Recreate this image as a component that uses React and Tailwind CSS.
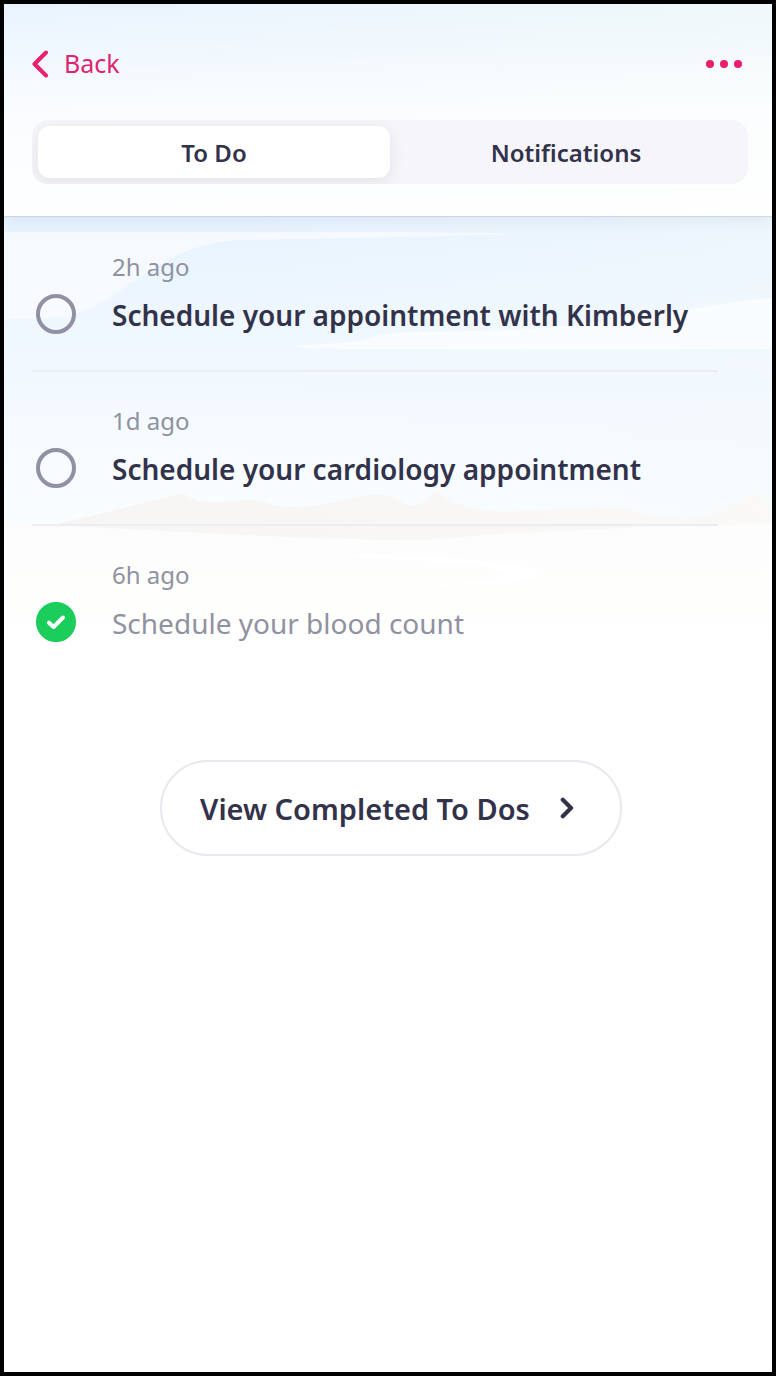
import { useState } from 'react';

const initialTodos = [
  { id: 'kimberly', time: '2h ago', title: 'Schedule your appointment with Kimberly', done: false },
  { id: 'cardiology', time: '1d ago', title: 'Schedule your cardiology appointment', done: false },
  { id: 'blood', time: '6h ago', title: 'Schedule your blood count', done: true },
];

/* Pale landscape: sky, clouds, hills and water fading to white. */
function Landscape() {
  return (
    <svg
      className="pointer-events-none absolute inset-x-0 top-0 h-[700px] w-full"
      viewBox="0 0 768 700"
      preserveAspectRatio="none"
      aria-hidden="true"
    >
      <defs>
        <linearGradient id="sky" x1="0" y1="212" x2="0" y2="520" gradientUnits="userSpaceOnUse">
          <stop offset="0" stopColor="#e6f2fe" />
          <stop offset="0.15" stopColor="#eaf5ff" />
          <stop offset="0.45" stopColor="#f1f8ff" />
          <stop offset="0.75" stopColor="#f6fbff" />
          <stop offset="1" stopColor="#f9fdff" />
        </linearGradient>
        <linearGradient id="glow" x1="0" y1="0" x2="768" y2="0" gradientUnits="userSpaceOnUse">
          <stop offset="0.3" stopColor="#f3f9fc" stopOpacity="0" />
          <stop offset="1" stopColor="#f3f9fc" stopOpacity="0.5" />
        </linearGradient>
        <linearGradient id="land" x1="0" y1="515" x2="0" y2="640" gradientUnits="userSpaceOnUse">
          <stop offset="0" stopColor="#fbfcfb" />
          <stop offset="0.6" stopColor="#fefefd" />
          <stop offset="1" stopColor="#ffffff" />
        </linearGradient>
        <linearGradient id="hills" x1="0" y1="0" x2="768" y2="0" gradientUnits="userSpaceOnUse">
          <stop offset="0" stopColor="#f7f5f4" />
          <stop offset="1" stopColor="#fbf9f8" />
        </linearGradient>
      </defs>
      <rect width="768" height="530" fill="url(#sky)" />
      <rect width="768" height="530" fill="url(#glow)" />
      <path
        d="M0 228H380C430 228 480 229 518 230C440 232 330 235 236 236C205 237 180 247 160 258C125 278 95 306 65 312C45 315 20 315 0 315Z"
        fill="#f7fbff"
        fillOpacity="0.9"
      />
      <path
        d="M288 342C310 340 345 340 365 334C395 325 440 329 500 326C580 324 620 311 670 307C700 304 735 296 768 294V345H370C340 345 300 345 288 342Z"
        fill="#fafdff"
        fillOpacity="0.9"
      />
      <path d="M0 520H768V640H0Z" fill="url(#land)" />
      <path
        d="M48 521C90 512 140 498 168 492C175 489 180 489 186 493C205 503 228 496 244 496C262 496 270 504 290 503C335 501 350 490 376 491C392 491 398 501 408 501C422 501 423 490 432 488C440 493 450 498 460 502C490 511 530 506 560 504C600 502 610 503 630 507C650 513 680 517 700 512C725 505 738 494 749 490C756 492 762 498 768 500V520C640 522 500 528 440 535C350 538 220 530 48 521Z"
        fill="url(#hills)"
      />
      <path
        d="M330 552C400 549 540 557 536 571C530 582 400 585 330 586C400 583 500 577 505 570C480 558 400 557 330 552Z"
        fill="#ffffff"
        fillOpacity="0.7"
      />
    </svg>
  );
}

function TodoItem({ todo, onToggle }) {
  return (
    <li className="mr-8 grid grid-cols-[40px_1fr] gap-x-9 gap-y-3 border-b-2 border-[#ececf3] py-[34px] pl-1 last:border-b-0">
      <p className="col-start-2 text-2xl leading-[30px] text-[#9091a1]">{todo.time}</p>
      <span className="col-start-1 grid size-10">
        <input
          id={todo.id}
          type="checkbox"
          checked={todo.done}
          onChange={onToggle}
          className="col-start-1 row-start-1 size-10 cursor-pointer appearance-none rounded-full border-4 border-[#9191a3] checked:border-[#1bcd5a] checked:bg-[#1bcd5a]"
        />
        {todo.done && (
          <svg
            className="pointer-events-none col-start-1 row-start-1 size-10"
            viewBox="0 0 40 40"
            fill="none"
            stroke="#ffffff"
            strokeWidth="4"
            strokeLinecap="round"
            strokeLinejoin="round"
            aria-hidden="true"
          >
            <path d="M13 20.7L17.6 25L27 15.5" />
          </svg>
        )}
      </span>
      <label
        htmlFor={todo.id}
        className={`text-[28px] leading-[42px] ${todo.done ? 'text-[#9091a1]' : 'font-semibold text-[#32324a]'}`}
      >
        {todo.title}
      </label>
    </li>
  );
}

export default function App() {
  const [todos, setTodos] = useState(initialTodos);
  const [tab, setTab] = useState('To Do');

  const toggle = (id) =>
    setTodos((list) => list.map((t) => (t.id === id ? { ...t, done: !t.done } : t)));

  return (
    <div className="relative flex min-h-screen flex-col border-4 border-black bg-white font-['Noto_Sans',sans-serif] text-[#32324a]">
      <Landscape />

      <header className="relative bg-white bg-linear-to-r from-[#e9f4ff] to-[#eff8fa] shadow-[0_1px_1px_rgba(60,70,100,0.12),0_4px_16px_rgba(60,70,100,0.07)]">
        <div className="bg-linear-to-b from-white/0 via-white/75 via-50% to-white/95 pt-10 pr-6 pb-8 pl-7">
          <div className="flex h-10 items-center justify-between">
            <a href="#back" className="flex items-center gap-4 text-[25px] text-[#e0226f]">
              <svg
                className="h-7 w-4"
                viewBox="0 0 16 28"
                fill="none"
                stroke="#e8206f"
                strokeWidth="4"
                strokeLinecap="round"
                strokeLinejoin="round"
                aria-hidden="true"
              >
                <path d="M14 2.5L2.5 14L14 25.5" />
              </svg>
              Back
            </a>
            <button type="button" aria-label="More options" className="flex h-10 cursor-pointer items-center pr-1.5">
              <svg className="h-2 w-9" viewBox="0 0 36 8" fill="#ec1c70" aria-hidden="true">
                <circle cx="4" cy="4" r="4" />
                <circle cx="18" cy="4" r="4" />
                <circle cx="32" cy="4" r="4" />
              </svg>
            </button>
          </div>

          <div role="tablist" className="mt-9 grid h-16 grid-cols-2 overflow-hidden rounded-2xl bg-[#f6f5fa] p-1.5">
            {['To Do', 'Notifications'].map((name) => (
              <button
                key={name}
                type="button"
                role="tab"
                aria-selected={tab === name}
                onClick={() => setTab(name)}
                className={`cursor-pointer rounded-xl pt-0.5 text-2xl font-semibold ${
                  tab === name ? 'bg-white shadow-[0_4px_16px_rgba(30,30,30,0.09)]' : ''
                }`}
              >
                {name}
              </button>
            ))}
          </div>
        </div>
      </header>

      <main className="relative flex flex-col pt-0.5 pr-[22px] pl-7">
        <ul>
          {todos.map((todo) => (
            <TodoItem key={todo.id} todo={todo} onToggle={() => toggle(todo.id)} />
          ))}
        </ul>
        <button
          type="button"
          className="mt-[82px] flex h-24 cursor-pointer items-center gap-[30px] self-center rounded-full border-2 border-[#e8e8ee] bg-white pr-[46px] pl-[38px] text-[29px] font-semibold"
        >
          <span className="pt-0.5">View Completed To Dos</span>
          <svg
            className="h-[22px] w-3.5"
            viewBox="0 0 14 22"
            fill="none"
            stroke="#32324a"
            strokeWidth="4.2"
            strokeLinecap="round"
            strokeLinejoin="round"
            aria-hidden="true"
          >
            <path d="M2.8 2.8L11 11L2.8 19.2" />
          </svg>
        </button>
      </main>
    </div>
  );
}
